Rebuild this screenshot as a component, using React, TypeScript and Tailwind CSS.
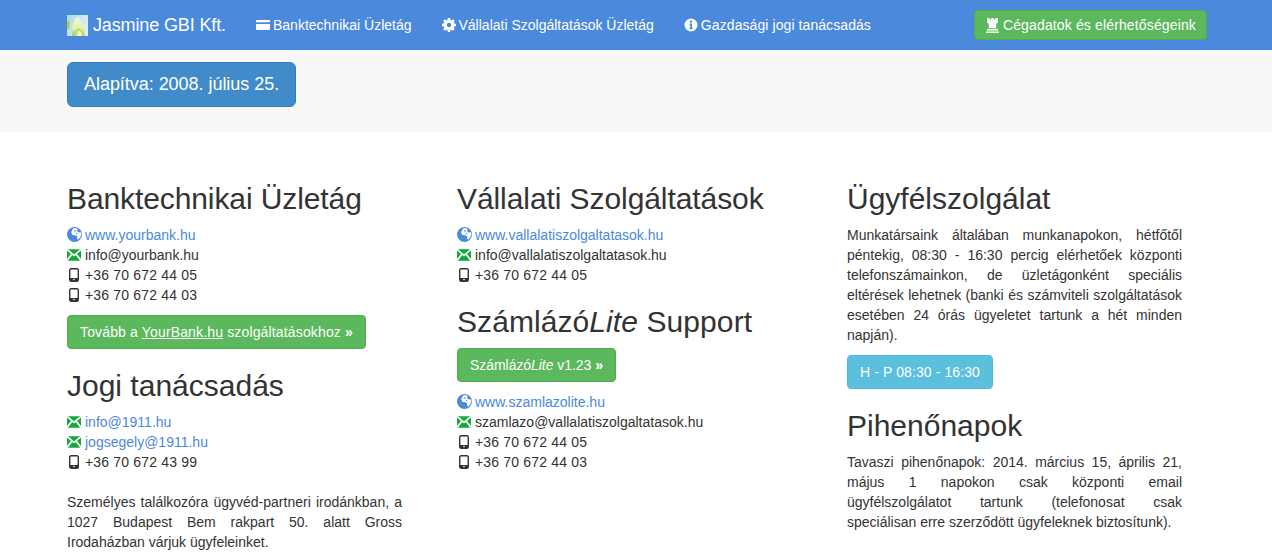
import React from 'react';

const font = "font-['Liberation_Sans',Arial,sans-serif]";

const CardIcon = () => (
  <svg width="14" height="14" viewBox="0 0 14 14" className="inline-block shrink-0" fill="#fff">
    <path d="M1 2h12a1 1 0 0 1 1 1v1.200H0V3a1 1 0 0 1 1-1zM0 6h14v5a1 1 0 0 1-1 1H1a1 1 0 0 1-1-1V6z" />
  </svg>
);

const CogIcon = () => (
  <svg width="14" height="14" viewBox="0 0 14 14" className="inline-block shrink-0">
    <path
      fill="#fff"
      fillRule="evenodd"
      d="M5.800 0h2.400l.3 1.900 1 .4L11.100 1.200l1.700 1.700-1.100 1.600.4 1 1.900.3v2.400l-1.900.3-.4 1 1.100 1.600-1.700 1.700-1.600-1.100-1 .4-.3 1.900H5.800l-.3-1.900-1-.4-1.600 1.100-1.700-1.700 1.100-1.600-.4-1L0 8.200V5.800l1.900-.3.4-1-1.100-1.600 1.700-1.700 1.600 1.100 1-.4zM7 4.800a2.200 2.200 0 1 0 0 4.400 2.200 2.200 0 0 0 0-4.400z"
    />
  </svg>
);

const InfoIcon = () => (
  <svg width="14" height="14" viewBox="0 0 14 14" className="inline-block shrink-0">
    <circle cx="7" cy="7" r="6.500" fill="#fff" />
    <rect x="6" y="2.600" width="2" height="2" fill="#4a89dc" />
    <path d="M5.400 5.600H8v4.200h.8V11H5.400V9.800h.8V6.800h-.8z" fill="#4a89dc" />
  </svg>
);

const TowerIcon = () => (
  <svg width="15" height="15" viewBox="0 0 15 15" className="inline-block shrink-0" fill="#fff">
    <path d="M2 0h2.500v1.500h1.700V0h2.600v1.500h1.700V0H13v4.500l-1.800 1.500v4.200H3.800V6L2 4.500z" />
    <path d="M2 11h11v1.500H2zM1 13.400h13V15H1z" />
  </svg>
);

const GlobeIcon = () => (
  <svg width="15" height="15" viewBox="0 0 15 15" className="inline-block shrink-0 mt-[-1px]">
    <circle cx="7.500" cy="7.500" r="7.500" fill="#4a89dc" />
    <path
      d="M6 1.500 9 1l1.800 1.500-1 1.500 2 1.500 2.200-.3.400 2.300-1.300 3-1.800 2-1.100-.6V9.500L8.500 8.300 5.500 8 4.200 5.500l.8-2z"
      fill="#fff"
    />
    <path d="M8 3l1 .8-1 1.200-1-.8zM8.500 5.500l2 1-1 1z" fill="#4a89dc" />
  </svg>
);

const MailIcon = () => (
  <svg width="14" height="12" viewBox="0 0 14 12" className="inline-block shrink-0">
    <rect width="14" height="11.500" y="0.250" fill="#14a83c" />
    <path d="M0 .5l7 5.800L14 .5M0 11.500l5-6.500M14 11.500 9 5" fill="none" stroke="#fff" strokeWidth="1.700" />
  </svg>
);

const PhoneIcon = () => (
  <svg width="10" height="14" viewBox="0 0 10 14" className="inline-block shrink-0">
    <rect x="0.700" y="0.700" width="8.600" height="12.600" rx="1.500" fill="none" stroke="#333" strokeWidth="1.400" />
    <rect x="1" y="10" width="8" height="3" fill="#333" />
    <circle cx="5" cy="11.500" r="0.800" fill="#fff" />
  </svg>
);

const Logo = () => (
  <svg width="21" height="21" viewBox="0 0 21 21" className="shrink-0">
    <defs>
      <linearGradient id="logoBg" x1="0" y1="0" x2="1" y2="0.400">
        <stop offset="0" stopColor="#a8dbe6" />
        <stop offset="1" stopColor="#d9f0f5" />
      </linearGradient>
      <linearGradient id="logoBud" x1="0" y1="0" x2="0" y2="1">
        <stop offset="0" stopColor="#f6f8e4" />
        <stop offset="0.600" stopColor="#e4efa8" />
        <stop offset="1" stopColor="#a5cc48" />
      </linearGradient>
    </defs>
    <rect width="21" height="21" fill="url(#logoBg)" />
    <path d="M0 6l2-1 1 4-1 5H0z" fill="#b9c94f" />
    <path d="M5 21 5.500 10 9 3l2-1 3 4 3 8 .5 7z" fill="url(#logoBud)" />
    <path d="M8 21c0-5 2-8 4-8s3 3 4 8z" fill="#c4dc6a" />
    <path d="M10 21c0-3 1-5 2.500-5s2 2 2.500 5z" fill="#f0f6cc" />
  </svg>
);

type RowKind = 'globe' | 'mail' | 'phone';

const Row = ({ kind, text, link }: { kind: RowKind; text: string; link?: boolean }) => (
  <div className="flex items-center h-5">
    <span className="w-[18px] flex justify-start">
      {kind === 'globe' && <GlobeIcon />}
      {kind === 'mail' && <MailIcon />}
      {kind === 'phone' && (
        <span className="pl-[2px] flex">
          <PhoneIcon />
        </span>
      )}
    </span>
    <span className={`${link ? 'text-[#4a89dc]' : ''} ${kind === 'phone' ? 'tracking-[0.18px]' : ''}`}>{text}</span>
  </div>
);

const Heading = ({ children, first, className }: { children: React.ReactNode; first?: boolean; className?: string }) => (
  <h2 className={`text-[30px] leading-[33px] font-normal mb-[10px] ${first ? '' : 'mt-5'} ${className ?? ''}`}>
    {children}
  </h2>
);

const GreenButton = ({ children, className }: { children: React.ReactNode; className?: string }) => (
  <div
    className={`inline-block h-[34px] px-3 leading-[32px] bg-[#5cb85c] border border-[#4cae4c] rounded text-white ${className ?? ''}`}
  >
    {children}
  </div>
);

export default function App() {
  return (
    <div className={`${font} h-[560px] overflow-hidden bg-white text-[14px] leading-5 text-[#333]`}>
      <nav className="h-[50px] bg-[#4a89dc] text-white">
        <div className="ml-[67px] w-[1140px] h-full flex items-center">
          <Logo />
          <span className="ml-[5px] text-[18px] tracking-[-0.13px]">Jasmine GBI Kft.</span>
          <div className="ml-[30px] flex items-center gap-[30px]">
            <span className="flex items-center gap-[3px]">
              <CardIcon />
              Banktechnikai Üzletág
            </span>
            <span className="flex items-center gap-[3px]">
              <CogIcon />
              Vállalati Szolgáltatások Üzletág
            </span>
            <span className="flex items-center gap-[3px] tracking-[0.08px]">
              <InfoIcon />
              Gazdasági jogi tanácsadás
            </span>
          </div>
          <div className="ml-auto h-[30px] px-[10px] flex items-center gap-[3px] bg-[#5cb85c] border border-[#4cae4c] rounded tracking-[0.14px]">
            <TowerIcon />
            Cégadatok és elérhetőségeink
          </div>
        </div>
      </nav>

      <div className="h-[82px] bg-[#f8f8f8] pt-3">
        <div className="ml-[67px] inline-block h-[45px] px-4 leading-[43px] text-[18px] tracking-[-0.04px] bg-[#428bca] border border-[#357ebd] rounded-md text-white">
          Alapítva: 2008. július 25.
        </div>
      </div>

      <main className="ml-[67px] pt-[50px] grid grid-cols-[390px_390px_335px]">
        <section className="w-[335px]">
          <Heading first className="tracking-[-0.1px]">
            Banktechnikai Üzletág
          </Heading>
          <Row kind="globe" text="www.yourbank.hu" link />
          <Row kind="mail" text="info@yourbank.hu" />
          <Row kind="phone" text="+36 70 672 44 05" />
          <Row kind="phone" text="+36 70 672 44 03" />
          <div className="mt-[10px]">
            <GreenButton className="tracking-[0.15px]">
              Tovább a <u>YourBank.hu</u> szolgáltatásokhoz <b>»</b>
            </GreenButton>
          </div>
          <Heading>Jogi tanácsadás</Heading>
          <Row kind="mail" text="info@1911.hu" link />
          <Row kind="mail" text="jogsegely@1911.hu" link />
          <Row kind="phone" text="+36 70 672 43 99" />
          <p className="mt-5 text-justify">
            Személyes találkozóra ügyvéd-partneri irodánkban, a 1027 Budapest Bem rakpart 50. alatt Gross Irodaházban
            várjuk ügyfeleinket.
          </p>
        </section>

        <section className="w-[335px]">
          <Heading first className="tracking-[-0.08px]">
            Vállalati Szolgáltatások
          </Heading>
          <Row kind="globe" text="www.vallalatiszolgaltatasok.hu" link />
          <Row kind="mail" text="info@vallalatiszolgaltatasok.hu" />
          <Row kind="phone" text="+36 70 672 44 05" />
          <Heading className="tracking-[0.08px]">
            Számlázó<i>Lite</i> Support
          </Heading>
          <GreenButton className="tracking-[-0.05px]">
            Számlázó<i>Lite</i> v1.23 <b>»</b>
          </GreenButton>
          <div className="mt-[10px]">
            <Row kind="globe" text="www.szamlazolite.hu" link />
            <Row kind="mail" text="szamlazo@vallalatiszolgaltatasok.hu" />
            <Row kind="phone" text="+36 70 672 44 05" />
            <Row kind="phone" text="+36 70 672 44 03" />
          </div>
        </section>

        <section className="w-[335px]">
          <Heading first>Ügyfélszolgálat</Heading>
          <p className="text-justify">
            Munkatársaink általában munkanapokon, hétfőtől péntekig, 08:30 - 16:30 percig elérhetőek központi
            telefonszámainkon, de üzletágonként speciális eltérések lehetnek (banki és számviteli szolgáltatások
            esetében 24 órás ügyeletet tartunk a hét minden napján).
          </p>
          <div className="mt-[10px] inline-block h-[34px] px-3 leading-[32px] bg-[#5bc0de] border border-[#46b8da] rounded text-white tracking-[0.1px]">
            H - P 08:30 - 16:30
          </div>
          <Heading>Pihenőnapok</Heading>
          <p className="text-justify">
            Tavaszi pihenőnapok: 2014. március 15, április 21, május 1 napokon csak központi email ügyfélszolgálatot
            tartunk (telefonosat csak speciálisan&nbsp;erre szerződött ügyfeleknek biztosítunk).
          </p>
        </section>
      </main>
    </div>
  );
}
